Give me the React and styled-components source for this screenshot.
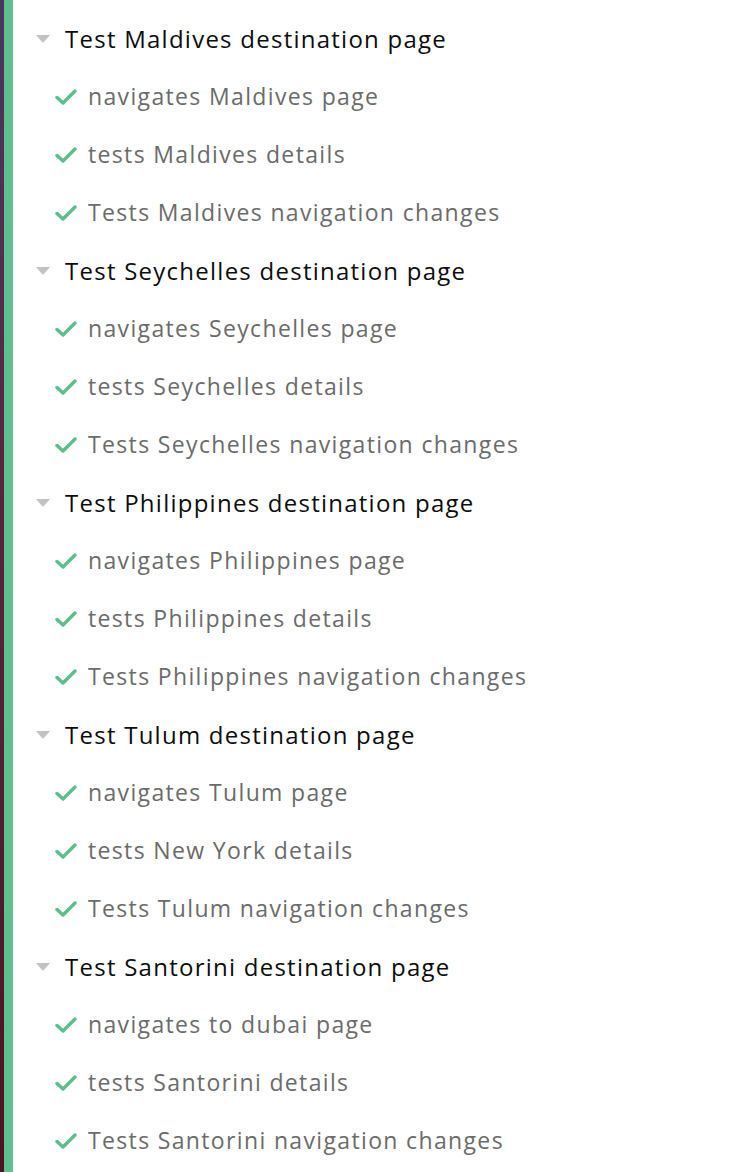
import React from 'react';
import styled, { createGlobalStyle } from 'styled-components';

const GlobalStyle = createGlobalStyle`
  html, body {
    margin: 0;
    padding: 0;
    background: #fff;
    font-family: "Open Sans", "Noto Sans", sans-serif;
  }
`;

const Page = styled.div`
  display: flex;
  min-height: 1172px;
`;

const Edge = styled.div`
  width: 4px;
  flex-shrink: 0;
  background: linear-gradient(180deg, #4b3563 0%, #5a2440 40%, #4a1422 100%);
`;

const Stripe = styled.div`
  width: 9px;
  flex-shrink: 0;
  background: #5fbf8e;
`;

const List = styled.div`
  flex: 1;
  padding: 9px 0 0 23px;
`;

const Row = styled.div`
  display: flex;
  align-items: center;
  height: 58px;
  padding-left: ${props => props.indent ? '19px' : '0'};
  gap: ${props => props.indent ? '11px' : '15px'};
`;

const Title = styled.span`
  font-size: 24px;
  font-weight: 500;
  color: #0d0d0d;
  letter-spacing: 1.25px;
`;

const TestName = styled.span`
  font-size: 23px;
  color: #6b6b6b;
  letter-spacing: 1.35px;
`;

const Caret = () => (
  <svg width="14" height="8" viewBox="0 0 14 8" style={{ marginTop: 2 }}>
    <path d="M0 0 L14 0 L7 8 Z" fill="#c2c2c2" />
  </svg>
);

const Check = () => (
  <svg width="22" height="16" viewBox="0 0 22 16" style={{ marginTop: 2 }}>
    <path d="M2 8.5 L8 14 L20 2" fill="none" stroke="#5bbf8b" strokeWidth="3.4" strokeLinecap="round" strokeLinejoin="round" />
  </svg>
);

const suites = [
  { title: 'Test Maldives destination page', tests: ['navigates Maldives page', 'tests Maldives details', 'Tests Maldives navigation changes'] },
  { title: 'Test Seychelles destination page', tests: ['navigates Seychelles page', 'tests Seychelles details', 'Tests Seychelles navigation changes'] },
  { title: 'Test Philippines destination page', tests: ['navigates Philippines page', 'tests Philippines details', 'Tests Philippines navigation changes'] },
  { title: 'Test Tulum destination page', tests: ['navigates Tulum page', 'tests New York details', 'Tests Tulum navigation changes'] },
  { title: 'Test Santorini destination page', tests: ['navigates to dubai page', 'tests Santorini details', 'Tests Santorini navigation changes'] },
];

const App = () => (
  <Page>
    <GlobalStyle />
    <Edge />
    <Stripe />
    <List>
      {suites.map(suite => (
        <div key={suite.title}>
          <Row>
            <Caret />
            <Title>{suite.title}</Title>
          </Row>
          {suite.tests.map(test => (
            <Row indent key={test}>
              <Check />
              <TestName>{test}</TestName>
            </Row>
          ))}
        </div>
      ))}
    </List>
  </Page>
);

export default App;
